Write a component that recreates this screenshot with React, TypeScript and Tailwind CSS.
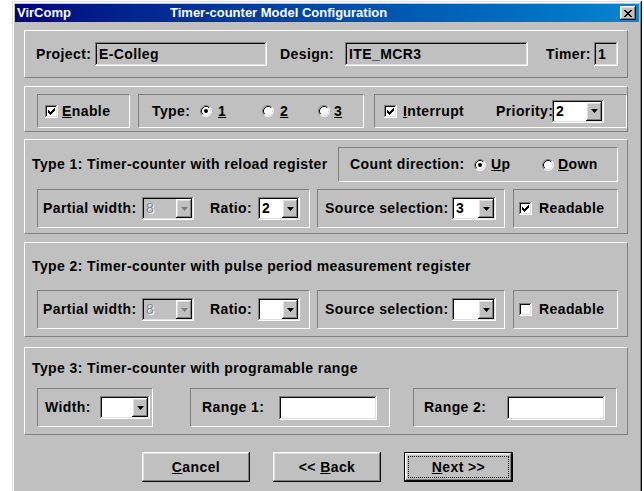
import type { ReactNode } from "react";

// classic 3D bevels
const sunken =
  "shadow-[inset_-1px_-1px_#ffffff,inset_1px_1px_#808080,inset_-2px_-2px_#dfdfdf,inset_2px_2px_#0a0a0a]";
const raised =
  "shadow-[inset_-1px_-1px_#0a0a0a,inset_1px_1px_#ffffff,inset_-2px_-2px_#808080,inset_2px_2px_#dfdfdf]";
const windowFrame =
  "shadow-[inset_-1px_-1px_#0a0a0a,inset_1px_1px_#dfdfdf,inset_-2px_-2px_#808080,inset_2px_2px_#ffffff]";

function Group({ className = "", children }: { className?: string; children: ReactNode }) {
  return (
    <div
      className={`w-[604px] border border-t-white border-l-white border-r-[#808080] border-b-[#808080] ${className}`}
    >
      {children}
    </div>
  );
}

function Frame({ className = "", children }: { className?: string; children: ReactNode }) {
  return (
    <div
      className={`flex items-center border border-t-[#808080] border-l-[#808080] border-r-white border-b-white ${className}`}
    >
      {children}
    </div>
  );
}

function Field({ className = "", value = "", readOnly = false }: { className?: string; value?: string; readOnly?: boolean }) {
  return (
    <div
      className={`flex h-[24px] items-center px-[4px] ${sunken} ${readOnly ? "bg-[#c0c0c0]" : "bg-white"} ${className}`}
    >
      {value}
    </div>
  );
}

function Combo({ className = "", value = "", disabled = false }: { className?: string; value?: string; disabled?: boolean }) {
  return (
    <div className={`flex h-[23px] p-[2px] ${sunken} ${disabled ? "bg-[#c0c0c0]" : "bg-white"} ${className}`}>
      <span
        className={`flex-1 pl-[2px] leading-[19px] ${
          disabled ? "font-normal text-[#8a8a8a] [text-shadow:1px_1px_#ffffff]" : "text-black"
        }`}
      >
        {value}
      </span>
      <div className={`flex w-[16px] items-center justify-center bg-[#c0c0c0] ${raised}`}>
        <svg width="7" height="4" viewBox="0 0 7 4">
          <polygon points="0,0 7,0 3.5,4" fill={disabled ? "#808080" : "#000"} />
        </svg>
      </div>
    </div>
  );
}

function CheckBox({ checked = false }: { checked?: boolean }) {
  const cols = [2, 3, 4, 3, 2, 1, 0];
  return (
    <div className={`flex h-[13px] w-[13px] shrink-0 items-center justify-center bg-white ${sunken}`}>
      {checked && (
        <svg width="7" height="7" viewBox="0 0 7 7" shapeRendering="crispEdges">
          {cols.map((y, x) => (
            <rect key={x} x={x} y={y} width="1" height="3" fill="#000" />
          ))}
        </svg>
      )}
    </div>
  );
}

function Radio({ checked = false }: { checked?: boolean }) {
  return (
    <svg width="12" height="12" viewBox="0 0 12 12" className="shrink-0">
      <circle cx="6" cy="6" r="5" fill="#fff" />
      <path d="M9.89 2.11 A5.5 5.5 0 0 0 2.11 9.89" stroke="#808080" fill="none" />
      <path d="M9.89 2.11 A5.5 5.5 0 0 1 2.11 9.89" stroke="#fff" fill="none" />
      <path d="M9.18 2.82 A4.5 4.5 0 0 0 2.82 9.18" stroke="#000" fill="none" />
      <path d="M9.18 2.82 A4.5 4.5 0 0 1 2.82 9.18" stroke="#dfdfdf" fill="none" />
      {checked && <circle cx="6" cy="6" r="2" fill="#000" />}
    </svg>
  );
}

function Button({ children }: { children: ReactNode }) {
  return (
    <div className={`flex h-[30px] w-[108px] items-center justify-center bg-[#c0c0c0] ${raised}`}>{children}</div>
  );
}

function TypeRow({ ratio, source, readable }: { ratio: string; source: string; readable: boolean }) {
  return (
    <div className="flex h-[39px] pl-[12px]">
      <Frame className="w-[273px] pl-[5px]">
        <span className="w-[99px]">Partial width:</span>
        <Combo className="w-[52px]" value="8" disabled />
        <span className="ml-[16px] w-[48px]">Ratio:</span>
        <Combo className="w-[42px]" value={ratio} />
      </Frame>
      <Frame className="ml-[7px] w-[188px] pl-[7px]">
        <span className="w-[127px]">Source selection:</span>
        <Combo className="w-[44px]" value={source} />
      </Frame>
      <Frame className="ml-[8px] w-[105px] pl-[5px]">
        <CheckBox checked={readable} />
        <span className="ml-[7px]">Readable</span>
      </Frame>
    </div>
  );
}

export default function App() {
  return (
    <div className="h-[491px] w-[644px] overflow-hidden bg-white font-['Liberation_Sans',Arial,sans-serif] text-[14px] font-bold tracking-[0.4px] text-black">
      <div className={`ml-[12px] mt-[1px] h-[520px] w-[630px] bg-[#c0c0c0] p-[3px] ${windowFrame}`}>
        {/* title bar */}
        <div className="flex h-[18px] items-center bg-linear-to-r from-[#000080] to-[#1084d0] pl-[2px] pr-[3px] text-[13px] tracking-normal text-white">
          <span className="w-[153px]">VirComp</span>
          <span className="flex-1">Timer-counter Model Configuration</span>
          <div className={`flex h-[14px] w-[16px] items-center justify-center bg-[#c0c0c0] ${raised}`}>
            <svg width="8" height="7" viewBox="0 0 8 7" shapeRendering="crispEdges">
              <path d="M0 0h2v1h1v1h2V1h1V0h2v1H7v1H6v1H5v1h1v1h1v1h1v1H6V6H5V5H3v1H2v1H0V6h1V5h1V4h1V3H2V2H1V1H0z" fill="#000" />
            </svg>
          </div>
        </div>

        <div className="ml-[9px]">
          {/* project info */}
          <Group className="mt-[8px] flex h-[48px] items-center pl-[11px]">
            <span className="w-[59px]">Project:</span>
            <Field className="w-[172px]" value="E-Colleg" readOnly />
            <span className="ml-[13px] w-[65px]">Design:</span>
            <Field className="w-[183px]" value="ITE_MCR3" readOnly />
            <span className="ml-[18px] w-[48px]">Timer:</span>
            <Field className="w-[24px]" value="1" readOnly />
          </Group>

          {/* enable / type / interrupt */}
          <Group className="mt-[8px] flex h-[46px] items-start pl-[12px] pt-[7px]">
            <Frame className="h-[34px] w-[93px] pl-[7px]">
              <CheckBox checked />
              <span className="ml-[4px]">
                <span className="underline">E</span>nable
              </span>
            </Frame>
            <Frame className="ml-[8px] h-[34px] w-[226px] pl-[13px]">
              <span className="w-[48px]">Type:</span>
              <div className="flex w-[62px] items-center">
                <Radio checked />
                <span className="ml-[6px] underline">1</span>
              </div>
              <div className="flex w-[56px] items-center">
                <Radio />
                <span className="ml-[6px] underline">2</span>
              </div>
              <div className="flex items-center">
                <Radio />
                <span className="ml-[4px] underline">3</span>
              </div>
            </Frame>
            <Frame className="ml-[10px] h-[34px] w-[253px] pl-[9px]">
              <CheckBox checked />
              <span className="ml-[6px] w-[93px]">
                <span className="underline">I</span>nterrupt
              </span>
              <span className="w-[56px]">Priority:</span>
              <Combo className="w-[52px]" value="2" />
            </Frame>
          </Group>

          {/* type 1 */}
          <Group className="mt-[7px] h-[95px]">
            <div className="flex h-[49px] items-center pl-[7px] pr-[9px]">
              <span className="flex-1">Type 1: Timer-counter with reload register</span>
              <Frame className="h-[35px] w-[280px] pl-[11px]">
                <span className="w-[124px]">Count direction:</span>
                <div className="flex w-[68px] items-center">
                  <Radio checked />
                  <span className="ml-[5px]">
                    <span className="underline">U</span>p
                  </span>
                </div>
                <div className="flex items-center">
                  <Radio />
                  <span className="ml-[4px]">
                    <span className="underline">D</span>own
                  </span>
                </div>
              </Frame>
            </div>
            <TypeRow ratio="2" source="3" readable />
          </Group>

          {/* type 2 */}
          <Group className="mt-[8px] h-[95px]">
            <div className="flex h-[47px] items-center pl-[7px]">
              Type 2: Timer-counter with pulse period measurement register
            </div>
            <TypeRow ratio="" source="" readable={false} />
          </Group>

          {/* type 3 */}
          <Group className="mt-[10px] h-[88px]">
            <div className="flex h-[40px] items-center pl-[7px]">Type 3: Timer-counter with programable range</div>
            <div className="flex h-[39px] pl-[12px]">
              <Frame className="w-[116px] pl-[7px]">
                <span className="w-[55px]">Width:</span>
                <Combo className="w-[50px]" />
              </Frame>
              <Frame className="ml-[37px] w-[200px] pl-[11px]">
                <span className="w-[77px]">Range 1:</span>
                <Field className="w-[98px]" />
              </Frame>
              <Frame className="ml-[23px] w-[204px] pl-[10px]">
                <span className="w-[83px]">Range 2:</span>
                <Field className="w-[98px]" />
              </Frame>
            </div>
          </Group>

          {/* buttons */}
          <div className="mt-[17px] flex pl-[118px]">
            <Button>
              <span>
                <span className="underline">C</span>ancel
              </span>
            </Button>
            <div className="ml-[23px]">
              <Button>
                <span>
                  &lt;&lt; <span className="underline">B</span>ack
                </span>
              </Button>
            </div>
            <div className="ml-[23px] h-[30px] w-[109px] border border-black">
              <div className={`h-full bg-[#c0c0c0] p-[3px] ${raised}`}>
                <div className="flex h-full items-center justify-center border border-dotted border-black">
                  <span>
                    <span className="underline">N</span>ext &gt;&gt;
                  </span>
                </div>
              </div>
            </div>
          </div>
        </div>
      </div>
    </div>
  );
}
